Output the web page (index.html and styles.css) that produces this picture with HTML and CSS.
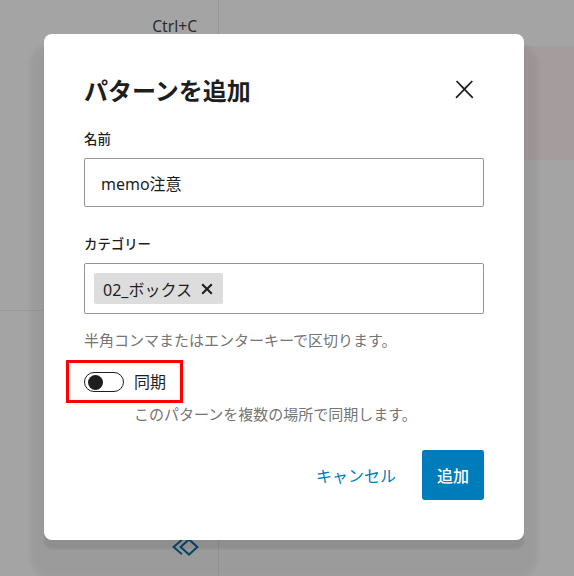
FILE: index.html
```html
<!DOCTYPE html>
<html lang="ja">
<head>
<meta charset="utf-8">
<title>パターンを追加</title>
<link rel="stylesheet" href="styles.css">
</head>
<body>
<div class="page">
  <aside class="sidebar">
    <div class="sidebar-top">
      <div class="shortcut">Ctrl+C</div>
    </div>
    <div class="sidebar-bottom">
      <svg class="pattern-icon" width="28" height="18" viewBox="0 0 28 18" aria-hidden="true">
        <polyline points="11,1.8 2.6,9 11,16.2" fill="none" stroke="currentColor" stroke-width="2"/>
        <polygon points="9.6,9 18,1.4 26.4,9 18,16.6" fill="none" stroke="currentColor" stroke-width="2"/>
      </svg>
    </div>
  </aside>
  <main class="content">
    <div class="content-top"></div>
    <div class="content-highlight"></div>
  </main>
</div>

<div class="modal" role="dialog" aria-labelledby="modal-title">
  <div class="modal-header">
    <h1 class="modal-title" id="modal-title">パターンを追加</h1>
    <button class="close-button" type="button" aria-label="閉じる">
      <svg width="28.8" height="28.8" viewBox="0 0 24 24" aria-hidden="true">
        <path d="M13 11.8l6.1-6.3-1-1-6.1 6.2-6.1-6.2-1 1 6.1 6.3-6.5 6.7 1 1 6.5-6.6 6.5 6.6 1-1z" fill="currentColor"/>
      </svg>
    </button>
  </div>

  <div class="field field-first">
    <label class="field-label">名前</label>
    <div class="text-input">memo注意</div>
  </div>

  <div class="field">
    <label class="field-label">カテゴリー</label>
    <div class="token-field">
      <span class="token">02_ボックス<svg class="token-remove" width="12" height="12" viewBox="0 0 12 12" aria-hidden="true"><path d="M1.2 1.2L10.8 10.8M10.8 1.2L1.2 10.8" fill="none" stroke="currentColor" stroke-width="2.1"/></svg></span>
    </div>
    <p class="help">半角コンマまたはエンターキーで区切ります。</p>
  </div>

  <div class="toggle-field">
    <div class="toggle-row">
      <span class="toggle-track"><span class="toggle-thumb"></span></span>
      <span class="toggle-label">同期</span>
    </div>
    <p class="help help-indent">このパターンを複数の場所で同期します。</p>
  </div>

  <div class="actions">
    <button class="btn btn-tertiary" type="button">キャンセル</button>
    <button class="btn btn-primary" type="button">追加</button>
  </div>
</div>
</body>
</html>
```

FILE: styles.css
```css
* { box-sizing: border-box; }

html, body {
  margin: 0;
  padding: 0;
}

body {
  width: 574px;
  height: 576px;
  overflow: hidden;
  background: #a4a4a4;
  font-family: "Noto Sans", "Noto Sans CJK JP", sans-serif;
  color: #1e1e1e;
  position: relative;
}

/* underlying page */
.page {
  display: grid;
  grid-template-columns: 219px 1fr;
  height: 576px;
}

.sidebar {
  border-right: 1px solid #979797;
  display: flex;
  flex-direction: column;
}

.sidebar-top {
  height: 311px;
  border-bottom: 1px solid #999;
}

.shortcut {
  padding: 16px 21px 0 0;
  text-align: right;
  font-size: 15.6px;
  line-height: 20px;
  color: #2b2b2b;
}

.sidebar-bottom {
  margin-top: auto;
  display: flex;
  justify-content: flex-end;
  align-items: flex-end;
  padding: 0 19px 20px 0;
}

.pattern-icon {
  display: block;
  color: #0a4a72;
}

.content {
  display: flex;
  flex-direction: column;
}

.content-top {
  height: 46px;
}

.content-highlight {
  height: 114px;
  background: #a49c9d;
}

/* modal */
.modal {
  position: absolute;
  left: 44px;
  top: 34px;
  width: 480px;
  background: #fff;
  border-radius: 8px;
  padding: 41px 40px 40px;
  box-shadow: 0 9px 2px rgba(0, 0, 0, 0.08), 0 24px 4px 14px rgba(0, 0, 0, 0.05);
  z-index: 10;
}

.modal-header {
  display: flex;
  align-items: center;
  justify-content: space-between;
  height: 32px;
}

.modal-title {
  margin: 0;
  font-size: 24px;
  line-height: 32px;
  font-weight: 700;
  color: #1e1e1e;
}

.close-button {
  border: 0;
  background: none;
  padding: 0;
  margin: 0 5.6px 4px 0;
  color: #1e1e1e;
  display: flex;
}

.field {
  margin-top: 29px;
  display: flex;
  flex-direction: column;
}

.field-first {
  margin-top: 24px;
}

.field-label {
  font-size: 13.4px;
  line-height: 16px;
  font-weight: 500;
  margin-bottom: 11px;
  color: #1e1e1e;
}

.text-input {
  height: 49px;
  border: 1px solid #949494;
  border-radius: 2px;
  padding: 0 16px;
  display: flex;
  align-items: center;
  font-size: 16px;
  color: #1e1e1e;
}

.token-field {
  height: 51px;
  border: 1px solid #949494;
  border-radius: 2px;
  padding: 0 9px;
  display: flex;
  align-items: center;
}

.token {
  display: inline-flex;
  align-items: center;
  height: 31px;
  background: #ddd;
  border-radius: 2px;
  padding: 0 10px 0 9px;
  font-size: 16px;
  color: #1e1e1e;
  gap: 9px;
}

.token-remove {
  display: block;
}

.help {
  margin: 17px 0 0;
  font-size: 15px;
  line-height: 18px;
  color: #757575;
}

.toggle-field {
  margin-top: 11px;
}

.toggle-row {
  display: inline-flex;
  align-items: center;
  gap: 10px;
  margin-left: -18px;
  border: 3px solid #f00;
  padding: 9px 14px 8px 15px;
  box-shadow: inset 0 0 5px rgba(0, 0, 0, 0.07);
}

.toggle-track {
  width: 40px;
  height: 20px;
  border: 1px solid #1e1e1e;
  border-radius: 10px;
  display: flex;
  align-items: center;
  padding-left: 2.5px;
}

.toggle-thumb {
  width: 15px;
  height: 15px;
  border-radius: 50%;
  background: #1e1e1e;
}

.toggle-label {
  font-size: 16px;
  line-height: 20px;
  color: #1e1e1e;
}

.help-indent {
  margin: 2px 0 0 50px;
}

.actions {
  margin-top: 27px;
  display: flex;
  justify-content: flex-end;
  gap: 11px;
}

.btn {
  height: 50px;
  border: 0;
  border-radius: 2.4px;
  font-family: "Noto Sans", "Noto Sans CJK JP", sans-serif;
  font-size: 16px;
  padding: 0 15px;
  cursor: pointer;
}

.btn-tertiary {
  background: none;
  color: #007cba;
}

.btn-primary {
  background: #007cba;
  color: #fff;
  font-weight: 500;
}
```
